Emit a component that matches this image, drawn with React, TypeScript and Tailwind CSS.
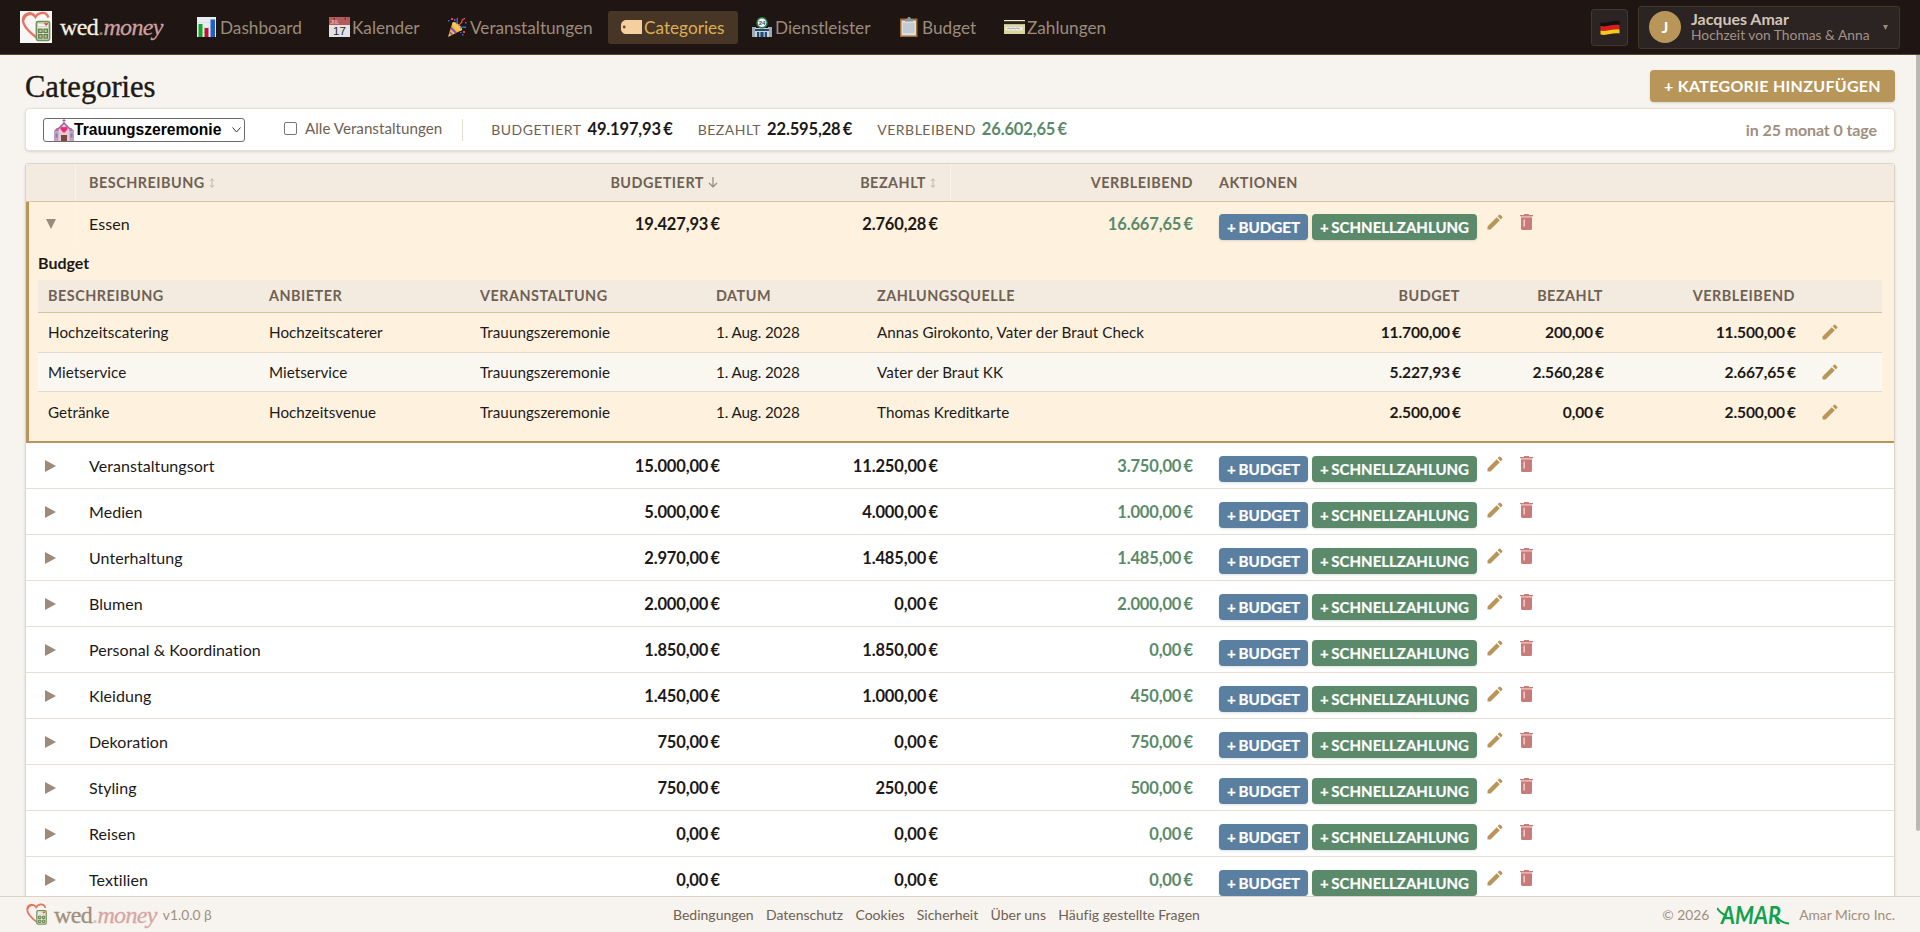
import { ReactNode } from "react";
import { MdEdit } from "react-icons/md";

interface Category {
    name: string;
    budget: string;
    paid: string;
    left: string;
}

const categories: Category[] = [
    { name: "Veranstaltungsort", budget: "15.000,00 €", paid: "11.250,00 €", left: "3.750,00 €" },
    { name: "Medien", budget: "5.000,00 €", paid: "4.000,00 €", left: "1.000,00 €" },
    { name: "Unterhaltung", budget: "2.970,00 €", paid: "1.485,00 €", left: "1.485,00 €" },
    { name: "Blumen", budget: "2.000,00 €", paid: "0,00 €", left: "2.000,00 €" },
    { name: "Personal & Koordination", budget: "1.850,00 €", paid: "1.850,00 €", left: "0,00 €" },
    { name: "Kleidung", budget: "1.450,00 €", paid: "1.000,00 €", left: "450,00 €" },
    { name: "Dekoration", budget: "750,00 €", paid: "0,00 €", left: "750,00 €" },
    { name: "Styling", budget: "750,00 €", paid: "250,00 €", left: "500,00 €" },
    { name: "Reisen", budget: "0,00 €", paid: "0,00 €", left: "0,00 €" },
    { name: "Textilien", budget: "0,00 €", paid: "0,00 €", left: "0,00 €" },
];

const budgetItems = [
    ["Hochzeitscatering", "Hochzeitscaterer", "Trauungszeremonie", "1. Aug. 2028", "Annas Girokonto, Vater der Braut Check", "11.700,00 €", "200,00 €", "11.500,00 €"],
    ["Mietservice", "Mietservice", "Trauungszeremonie", "1. Aug. 2028", "Vater der Braut KK", "5.227,93 €", "2.560,28 €", "2.667,65 €"],
    ["Getränke", "Hochzeitsvenue", "Trauungszeremonie", "1. Aug. 2028", "Thomas Kreditkarte", "2.500,00 €", "0,00 €", "2.500,00 €"],
];

const rowGrid = "grid grid-cols-[50px_445px_212px_218px_255px_1fr]";
// the open row has a 3px accent border in front of the first column
const openRowGrid = "grid grid-cols-[47px_445px_212px_218px_255px_1fr]";
const itemGrid = "grid grid-cols-[221px_211px_236px_161px_437px_166px_143px_192px_1fr]";
const amount = "font-bold text-[16.500px] tracking-[-0.15px] [word-spacing:-1.500px]";

const ChartIcon = () => (
    <svg viewBox="0 0 20 20" className="h-5 w-5">
        <path fill="#e6eef2" d="M0 0h19v20H0z" />
        <path fill="#c9d6df" d="M0 5h19v.6H0zM0 10h19v.6H0zM0 15h19v.6H0z" />
        <path fill="#0fa827" d="M1.500 7h4v13h-4z" />
        <path fill="#c3122f" d="M7.500 11h4v9h-4z" />
        <path fill="#1d5fc4" d="M13.500 2.500h4.500V20h-4.500z" />
    </svg>
);

const CalendarIcon = () => (
    <svg viewBox="0 0 21 20" className="h-5 w-[21px]">
        <path fill="#e3e3e3" d="M0 0h21v20H0z" />
        <path fill="#b45a5a" d="M0 0h21v8H0z" />
        <path fill="#5c3433" d="M4.500 1h1.500v1.500H4.500zM15.500 1H17v1.500h-1.500z" />
        <text x="1.500" y="7" fontSize="4.500" fontWeight="700" fill="#e5b9b9" fontFamily="Liberation Sans">JUL</text>
        <text x="10.500" y="17.800" fontSize="11.500" textAnchor="middle" fill="#2b2b2b" fontFamily="Liberation Sans">17</text>
    </svg>
);

const PartyIcon = () => (
    <svg viewBox="0 0 20 20" className="h-5 w-5">
        <path fill="#f6bf3a" d="M5.500 5.500 15 13 1 20z" />
        <path fill="#8a4fc0" d="m4.300 9.500 5.800 5.900-2 1-4.600-4.500zM2.800 14l3.200 3.300-1.600.8-2.200-2.100z" />
        <ellipse cx="10.300" cy="9.200" rx="6" ry="2.300" transform="rotate(40 10.300 9.200)" fill="#f3c95a" />
        <path d="M9.500 7c2-2 0-4 1-6M13 11c3-2 3 0 6-1" stroke="#4172d8" fill="none" strokeWidth="1.400" />
        <path d="M12 9c0-3 3-2 3-5s2-1 3-3" stroke="#e24a52" fill="none" strokeWidth="1.400" />
        <path fill="#e24a52" d="M4 1h2v2H4zM16 14h2v2h-2zM18 5h1.500v1.500H18z" />
        <path fill="#4172d8" d="M1 3h1.500v1.500H1zM15 17h1.500v1.500H15z" />
        <path fill="#8a4fc0" d="M7 2h1.500v2H7zM13 15h1.500v1H13z" />
    </svg>
);

const TagIcon = () => (
    <svg viewBox="0 0 21 14" className="h-3.5 w-[21px]">
        <path fill="#f6cf9f" d="M4 0h17v14H4Q0 12.500 0 9V5Q0 1.500 4 0z" />
        <circle cx="3.200" cy="7" r="1.400" fill="#6d4a2c" />
    </svg>
);

const StoreIcon = () => (
    <svg viewBox="0 0 20 20" className="h-5 w-5">
        <path fill="#9ba9b1" d="M0 10h4v10H0zM16 10h4v10h-4z" />
        <path fill="#c9d2d6" d="M3 11h14v9H3z" />
        <circle cx="10" cy="5.800" r="5.800" fill="#2d7e4b" />
        <circle cx="10" cy="5.800" r="4.300" fill="#f3f5f1" />
        <text x="10" y="8" fontSize="6" fontWeight="700" textAnchor="middle" fill="#35507a" fontFamily="Liberation Sans">24</text>
        <path fill="#28486f" d="M3 12h14v2H3zM5 15h10v5H5z" />
        <path fill="#8fb5d8" d="M7 15h1.500v5H7zM11.500 15H13v5h-1.500z" />
    </svg>
);

const ClipboardIcon = () => (
    <svg viewBox="0 0 20 20" className="h-5 w-5">
        <path fill="#9c6a35" d="M1 1.500h17.500V20H1z" />
        <path fill="#dcdfe2" d="M2.500 3.500H17v15H2.500z" />
        <path fill="#c5cacf" d="M4 6h11.500v10H4z" />
        <path fill="#8d949a" d="M6 2h2l1-2h2l1 2h2v2.500H6z" />
    </svg>
);

const CardIcon = () => (
    <svg viewBox="0 0 21 14" className="h-3.5 w-[21px]">
        <path fill="#dcd59b" d="M0 0h21v14H0z" />
        <path fill="#efe9be" d="M0 0h21v1.200H0zM0 4.200h21v1H0z" />
        <path fill="#26231f" d="M0 1.200h21v3H0z" />
        <path fill="#f1efe2" d="M1.500 7h17v3.500h-17z" />
        <path d="m3 9 2-1 2 1 2-1 2 1 2-1 3 1" stroke="#6e84b5" strokeWidth=".7" fill="none" />
    </svg>
);

const ChurchIcon = () => (
    <svg viewBox="0 0 20 22" className="h-[22px] w-5">
        <path fill="#c9a0bb" d="M0 12 3 9h14l3 3v10H0z" />
        <path fill="#a9799b" d="M0 12 3 9h3v3zM20 12l-3-3h-3v3z" />
        <path fill="#e3c9d9" d="M4.500 9 10 3.500 15.500 9v13h-11z" />
        <path fill="#9b5f8b" d="M10 3 3.500 9.500l1 1L10 5l5.500 5.500 1-1z" />
        <path stroke="#9b5f8b" strokeWidth="1" d="M10 0v4M8.500 1.500h3" />
        <path fill="#ec2d78" d="M10 14 6.700 10.700a1.900 1.900 0 0 1 3.300-2 1.900 1.900 0 0 1 3.300 2z" />
        <path fill="#7b4a35" d="M7 16h6v6H7z" />
        <path fill="#6a86c0" d="M1.500 14.500h2v4h-2zM16.500 14.500h2v4h-2z" />
    </svg>
);

const FlagIcon = () => (
    <svg viewBox="0 0 20 15" className="h-[15px] w-5">
        <path fill="#111" d="M.5 2.500C6 4 12 0 19.500.8V5C12 4 7 7.500.5 6z" />
        <path fill="#dd1b1b" d="M.5 6C7 7.500 12 4 19.500 5v4.500C12 8.500 7 12 .5 10.500z" />
        <path fill="#f6c71c" d="M.5 10.500C7 12 12 8.500 19.500 9.500v4C12 12.500 7 16 .5 14.500z" />
    </svg>
);

const Logo = ({ className = "" }: { className?: string }) => (
    <svg viewBox="0 0 32 32" className={className}>
        <path d="M18.500 28C10 22 2.500 15 3 8.500 3.500 2.500 11-.5 15.500 6 18 1.500 26-.5 28.500 6.500" fill="none" stroke="#e07864" strokeWidth="2.400" />
        <path d="M3 8C4 1.500 11 0 15.500 6 11 3 6 4 4.500 9.500z" fill="#e07864" />
        <rect x="16.500" y="10.700" width="13" height="18.600" rx="1.500" fill="#f7f6f2" stroke="#75905b" strokeWidth="1.800" />
        <path d="M18.500 15.700h9M18.500 12.700h9" stroke="#c4cdb8" strokeWidth="1" />
        <path d="m26.200 15-2-2a1 1 0 0 1 2-.5 1 1 0 0 1 2 .5z" fill="#e0563e" />
        <path d="M18.700 18.200h3.400v3.400h-3.400zM24 18.200h3.400v3.400H24zM18.700 23.700h3.400v3.400h-3.400zM24 23.700h3.400v3.400H24z" fill="#b9c8a4" stroke="#607d45" strokeWidth="1.300" />
    </svg>
);

const TrashIcon = () => (
    <svg viewBox="0 0 13 16" className="h-4 w-[13px]">
        <path fill="#c97b7b" d="M4 0h5v1h4v1.300H0V1h4zM1 4h11v10.500Q12 16 10.500 16h-8Q1 16 1 14.500z" />
        <path fill="#dfa29d" d="M1 2.300h11V4H1z" />
        <path fill="#f5dcd2" d="M3.500 5.500h1.300v7H3.500z" />
    </svg>
);

const navItems: { label: string; icon: ReactNode; width: string; active?: boolean }[] = [
    { label: "Dashboard", icon: <ChartIcon />, width: "w-[131px]" },
    { label: "Kalender", icon: <CalendarIcon />, width: "w-[117px]" },
    { label: "Veranstaltungen", icon: <PartyIcon />, width: "w-[173px]" },
    { label: "Categories", icon: <TagIcon />, width: "w-[130px]", active: true },
    { label: "Dienstleister", icon: <StoreIcon />, width: "w-[146px]" },
    { label: "Budget", icon: <ClipboardIcon />, width: "w-[104px]" },
    { label: "Zahlungen", icon: <CardIcon />, width: "w-[130px]" },
];

const SortIcon = () => (
    <svg viewBox="0 0 6 10" className="ml-1 h-2.5 w-1.5" fill="none" stroke="#bfb3a6" strokeWidth="1">
        <path d="M3 .8v8.400M1 2.800l2-2 2 2M1 7.200l2 2 2-2" />
    </svg>
);

const RowActions = ({ offset }: { offset: string }) => (
    <div className={`flex h-full items-start pl-[13px] ${offset}`}>
        <button className="h-[26px] w-[89px] rounded bg-[#5a7fa0] text-[15.200px] leading-[26px] font-bold text-white shadow [word-spacing:-1px] [-webkit-text-stroke:0.2px]">+ BUDGET</button>
        <button className="ml-[4px] h-[26px] w-[165px] rounded bg-[#5a8a6a] text-[15px] leading-[26px] font-bold text-white shadow-sm [word-spacing:-1px] [-webkit-text-stroke:0.2px]">+ SCHNELLZAHLUNG</button>
        <MdEdit className="ml-2 h-5 w-5 -translate-y-0.5 text-[#b8965a]" />
        <div className="ml-[15px]">
            <TrashIcon />
        </div>
    </div>
);

const CategoryRow = ({ name, budget, paid, left, open = false }: Category & { open?: boolean }) => (
    <div className={open ? `${openRowGrid} h-11 border-l-3 border-[#b8965a] bg-[#fef2df]` : `${rowGrid} h-[46px] border-b border-[#e6dfd3]`}>
        <div className={open ? "flex items-center border-r border-[#fdf3e6] pl-[17px]" : "flex items-center pl-[19px]"}>
            {open ? (
                <svg viewBox="0 0 10 10" className="h-2.5 w-2.5"><path fill="#9c8a7a" d="M0 0h10L5 10z" /></svg>
            ) : (
                <svg viewBox="0 0 11 12" className="h-3 w-[11px]"><path fill="#9c8a7a" d="M0 0v12l11-6z" /></svg>
            )}
        </div>
        <div className="flex items-center pl-[13px] tracking-[0.06px]">{name}</div>
        <div className={`flex items-center justify-end pr-[13px] ${amount}`}>{budget}</div>
        <div className={`flex items-center justify-end pr-[13px] ${amount}`}>{paid}</div>
        <div className={`flex items-center justify-end pr-[13px] text-[#5a8a6a] ${amount}`}>{left}</div>
        <RowActions offset={open ? "pt-3" : "pt-[13px]"} />
    </div>
);

const Stat = ({ label, value, green = false }: { label: string; value: string; green?: boolean }) => (
    <div className="mr-[25px] flex items-baseline gap-1.5">
        <span className="text-[14px] tracking-[0.5px] text-[#6f6153]">{label}</span>
        <span className={`${amount} ${green ? "text-[#5a8a6a]" : ""}`}>{value}</span>
    </div>
);

export default function App() {
    return (
        <div className="flex h-[932px] w-[1920px] flex-col overflow-hidden bg-[#f7f3ee] font-[Lato,sans-serif] text-[16px] leading-5 text-[#1c1917] [font-variant-ligatures:none]">
            <header className="flex h-[55px] shrink-0 items-center border-b border-[#5b4828] bg-[#1f1613] pr-5 pl-5">
                <Logo className="h-8 w-8 bg-[#f8f7f5]" />
                <div className="ml-2 w-[124px] font-['Liberation_Serif',serif] text-[24px] leading-8 tracking-[-0.65px] whitespace-nowrap text-[#f6eee2] [-webkit-text-stroke:0.3px]">
                    wed<span className="text-[#8e7a6d]">.</span><span className="text-[#d0a0a0] italic">money</span>
                </div>
                <nav className="flex">
                    {navItems.map((item) => (
                        <a
                            key={item.label}
                            className={`mr-px flex h-[33px] items-center rounded-[3px] pl-[13px] ${item.width} ${item.active ? "bg-[#473625] text-[#dcae57]" : "text-[#9c8b7b]"}`}
                        >
                            <span className="flex w-[23px] shrink-0">{item.icon}</span>
                            <span className="pt-0.5 text-[17.200px]">{item.label}</span>
                        </a>
                    ))}
                </nav>
                <button className="ml-auto flex h-[37px] w-[37px] items-center justify-center rounded-[3px] border border-[#43372a] bg-[#2c2422]">
                    <FlagIcon />
                </button>
                <div className="ml-2.5 flex h-[43px] w-[262px] items-center rounded-[3px] border border-[#43372a] bg-[#2c2422] pl-2.5">
                    <div className="flex h-8 w-8 items-center justify-center rounded-full bg-[#b8965a] text-[16px] font-bold text-white">J</div>
                    <div className="ml-2.5">
                        <div className="text-[16px] leading-4 font-bold text-[#d2c5b8]">Jacques Amar</div>
                        <div className="text-[13.800px] leading-4 text-[#a09286]">Hochzeit von Thomas &amp; Anna</div>
                    </div>
                    <svg viewBox="0 0 5 5" className="mr-[11px] ml-auto h-[5px] w-[5px]"><path fill="#9c8b7b" d="M0 0h5L2.500 5z" /></svg>
                </div>
            </header>

            <main className="flex h-[841px] shrink-0 overflow-hidden">
                <div className="flex w-[1895px] shrink-0 flex-col pt-[15px] pl-[25px]">
                    <div className="flex h-[38px] shrink-0 items-start justify-between">
                        <h1 className="font-['Liberation_Serif',serif] text-[30.500px] leading-[34px] [-webkit-text-stroke:0.4px]">Categories</h1>
                        <button className="h-8 w-[245px] rounded bg-[#b8965a] text-[16px] font-bold tracking-[0.3px] text-white shadow-sm">+ KATEGORIE HINZUFÜGEN</button>
                    </div>

                    <div className="flex h-[43px] shrink-0 items-center rounded border border-[#e8dfd3] bg-white pr-[17px] pl-[17px] shadow-sm">
                        <div className="flex h-6 w-[202px] items-center rounded-[3px] border border-[#6b6b6b] pl-2.5">
                            <ChurchIcon />
                            <span className="font-['Liberation_Sans',sans-serif] text-[15.600px] font-bold text-black">Trauungszeremonie</span>
                            <svg viewBox="0 0 9 6" className="mr-[3px] ml-auto h-1.5 w-[9px]" fill="none" stroke="#333"><path d="m.5.5 4 4.500 4-4.500" /></svg>
                        </div>
                        <span className="mb-[3px] ml-[39px] h-[13px] w-[13px] rounded-[2px] border border-[#767676]" />
                        <span className="mb-[3px] ml-2 text-[15.200px] text-[#6f6153]">Alle Veranstaltungen</span>
                        <span className="mr-7 ml-[20px] h-[22px] w-px bg-[#e8dfd3]" />
                        <Stat label="BUDGETIERT" value="49.197,93 €" />
                        <Stat label="BEZAHLT" value="22.595,28 €" />
                        <Stat label="VERBLEIBEND" value="26.602,65 €" green />
                        <span className="ml-auto font-bold tracking-[-0.1px] text-[#a08f7e]">in 25 monat 0 tage</span>
                    </div>

                    <div className="mt-3 shrink-0 rounded-[3px] border border-[#ddd5ca] bg-white shadow-sm">
                        <div className={`${rowGrid} h-[38px] items-center border-b border-[#d9c19a] bg-[#f3ebe0] text-[14.400px] font-bold tracking-[0.5px] text-[#6f6153]`}>
                            <div className="h-full border-r border-[#f9f3ea]" />
                            <div className="flex items-center pl-[13px]">BESCHREIBUNG<SortIcon /></div>
                            <div className="flex items-center justify-end pr-[13px]">
                                BUDGETIERT
                                <svg viewBox="0 0 10 11" className="mr-0.5 ml-1 h-[11px] w-2.5" fill="none" stroke="#968879" strokeWidth="1.200"><path d="M5 0v10M1 6l4 4 4-4" /></svg>
                            </div>
                            <div className="flex h-full items-center justify-end border-r border-[#f9f3ea] pr-[14px]">BEZAHLT<SortIcon /></div>
                            <div className="pr-[13px] text-right">VERBLEIBEND</div>
                            <div className="pl-[13px]">AKTIONEN</div>
                        </div>
                        <CategoryRow name="Essen" budget="19.427,93 €" paid="2.760,28 €" left="16.667,65 €" open />
                        <div className="h-[197px] border-b-2 border-l-3 border-[#b8965a] bg-[#fef2df] pr-3 pl-[9px]">
                            <div className="flex h-[34px] items-center font-bold">Budget</div>
                            <div className={`${itemGrid} h-[33px] items-center border-b border-[#d9c19a] bg-[#f3ebe0] text-[14.400px] font-bold tracking-[0.5px] text-[#6f6153] [&>*]:px-2.5`}>
                                <div>BESCHREIBUNG</div>
                                <div>ANBIETER</div>
                                <div>VERANSTALTUNG</div>
                                <div>DATUM</div>
                                <div>ZAHLUNGSQUELLE</div>
                                <div className="text-right">BUDGET</div>
                                <div className="text-right">BEZAHLT</div>
                                <div className="text-right">VERBLEIBEND</div>
                                <div />
                            </div>
                            {budgetItems.map((item, index) => (
                                <div
                                    key={item[0]}
                                    className={`${itemGrid} items-center pb-px text-[15.200px] tracking-[0.04px] [&>*]:pl-2.5 ${index === 0 ? "h-10" : index === 1 ? "h-[39px]" : "h-10"} ${index === 2 ? "" : "border-b border-[#e0d9cd]"} ${index === 1 ? "bg-[#faf7f1]" : ""}`}
                                >
                                    {item.map((value, column) => (
                                        <div
                                            key={column}
                                            className={column > 4 ? "pr-[9px] text-right text-[15.600px] font-bold tracking-[-0.15px] [word-spacing:-1.500px]" : column === 3 ? "tracking-[-0.1px]" : ""}
                                        >
                                            {value}
                                        </div>
                                    ))}
                                    <div><MdEdit className="ml-[5px] h-5 w-5 text-[#b8965a]" /></div>
                                </div>
                            ))}
                        </div>
                        {categories.map((category) => (
                            <CategoryRow key={category.name} {...category} />
                        ))}
                    </div>
                </div>
                <div className="ml-auto h-[776px] w-1 rounded-b bg-[#bab7b5]" />
            </main>

            <footer className="grid h-9 shrink-0 grid-cols-[648px_1fr_400px] items-center border-t border-[#ddd3c4] bg-[#f7f3ee] px-[25px] text-[13.800px] text-[#a08f7e]">
                <div className="flex items-center">
                    <Logo className="h-[23px] w-[23px]" />
                    <span className="ml-1.5 font-['Liberation_Serif',serif] text-[24px] leading-7 tracking-[-0.65px] [-webkit-text-stroke:0.3px]">
                        wed<span className="text-[#d5c5b6]">.</span><span className="text-[#d6a5a5] italic">money</span>
                    </span>
                    <span className="ml-1.5">v1.0.0 β</span>
                </div>
                <div className="flex gap-[12.300px] text-[14px] text-[#6f6153]">
                    <a>Bedingungen</a>
                    <a>Datenschutz</a>
                    <a>Cookies</a>
                    <a>Sicherheit</a>
                    <a>Über uns</a>
                    <a>Häufig gestellte Fragen</a>
                </div>
                <div className="flex items-center justify-end">
                    <span>© 2026</span>
                    <svg viewBox="0 0 72 34" className="mr-2.5 ml-2 h-[34px] w-[72px]">
                        <text x="4" y="26" textLength="60" lengthAdjust="spacingAndGlyphs" fontFamily="Lato" fontSize="25" fontWeight="700" fontStyle="italic" fill="#12a150">AMAR</text>
                        <path d="M0 10q3 5 10 8M60 19q4 6 12 6.500" fill="none" stroke="#12a150" strokeWidth="2" />
                    </svg>
                    <span>Amar Micro Inc.</span>
                </div>
            </footer>
        </div>
    );
}
